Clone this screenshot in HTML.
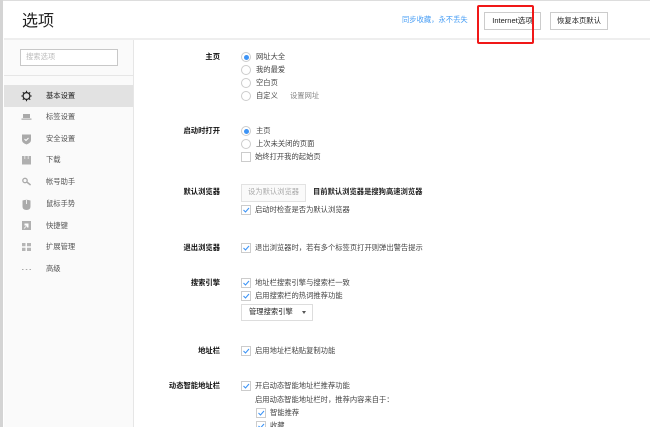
<!DOCTYPE html>
<html><head><meta charset="utf-8"><style>
html,body{margin:0;padding:0;width:650px;height:427px;overflow:hidden;background:#fff}
body{position:relative;font-family:"Liberation Sans","Noto Sans CJK SC",sans-serif;font-size:7.3px;color:#444;filter:blur(.25px)}
.a{position:absolute}
.t{position:absolute;white-space:nowrap;line-height:10px;height:10px}
.l{position:absolute;white-space:nowrap;line-height:10px;height:10px;right:430px;color:#111;font-weight:bold}
.s{position:absolute;left:46px;white-space:nowrap;line-height:10px;color:#555}
.r{position:absolute;left:241px;width:8px;height:8px;border:1px solid #ccc;border-radius:50%;background:#fff}
.r.on::after{content:"";position:absolute;left:1.5px;top:1.5px;width:5px;height:5px;border-radius:50%;background:#3d94f6}
.c{position:absolute;width:8px;height:8px;border:1px solid #ccc;background:#fff}
.c svg{position:absolute;left:0;top:0}
.b{position:absolute;border:1px solid #ccc;box-sizing:border-box;text-align:center;background:#fff;color:#222;line-height:16px;white-space:nowrap}
</style></head><body>
<div class="a" style="left:0;top:0;width:650px;height:1px;background:#ddd"></div>
<div class="a" style="left:0;top:0;width:3px;height:427px;background:#d4d4d4"></div>
<div class="a" style="left:4px;top:40px;width:129px;height:387px;background:#fafafa"></div>
<div class="a" style="left:133px;top:40px;width:1px;height:387px;background:#e6e6e6"></div>
<div class="a" style="left:4px;top:38px;width:646px;height:2px;background:#eee"></div>
<div class="t" style="left:22px;top:13px;height:18px;line-height:18px;font-size:16px;color:#222">选项</div>
<div class="t" style="left:402px;top:15px;color:#4a9ff5">同步收藏，永不丢失</div>
<div class="b" style="left:484px;top:12px;width:57px;height:18px;font-size:7.5px">Internet选项</div>
<div class="b" style="left:550px;top:12px;width:58px;height:18px">恢复本页默认</div>
<div class="a" style="left:477px;top:5px;width:53px;height:35px;border:2px solid #f01818;border-radius:2px"></div>

<div class="a" style="left:20px;top:49px;width:96px;height:15px;border:1px solid #c8c8c8;background:#fff"></div>
<div class="t" style="left:26px;top:52px;color:#bbb">搜索选项</div>
<div class="a" style="left:4px;top:75px;width:129px;height:1px;background:#e6e6e6"></div>
<div class="a" style="left:4px;top:85px;width:129px;height:22px;background:#e2e2e2"></div>

<svg class="a" style="left:0;top:0" width="134" height="280">
<g transform="translate(26.5,96)"><circle r="3.4" fill="none" stroke="#222" stroke-width="1.2"/><path d="M0-5.2V-3.4M0 3.4V5.2M-5.2 0H-3.4M3.4 0H5.2M-3.7-3.7L-2.5-2.5M3.7-3.7L2.5-2.5M-3.7 3.7L-2.5 2.5M3.7 3.7L2.5 2.5" stroke="#222" stroke-width="1.1"/></g>
<path d="M23 114h7v4h-7zM21.5 118.500h10v1.200h-10z" fill="#aaa"/>
<path d="M22 134.500h9v5.500q0 3-4.500 4.500q-4.500-1.500-4.500-4.500z" fill="#aaa"/><path d="M24.500 139l1.500 1.500 2.500-2.500" fill="none" stroke="#fff" stroke-width="1"/>
<path d="M22 156h2.500v3h4v-3h2.500v8.500h-9z" fill="#b0b0b0"/><path d="M25.200 156h2.600v3h1.400l-2.700 2.500-2.700-2.500h1.400z" fill="#b0b0b0"/>
<circle cx="25" cy="180.500" r="2.200" fill="none" stroke="#aaa" stroke-width="1.300"/><path d="M26.800 182l3.800 3" stroke="#aaa" stroke-width="1.500"/>
<path d="M22.500 200.500q4-1.500 8 0v6q0 3.500-4 3.500t-4-3.500z" fill="#aaa"/><path d="M26.500 200v4" stroke="#fff" stroke-width=".8"/>
<rect x="22" y="221" width="9" height="9" fill="#b0b0b0"/><path d="M24.500 223.500h4v4h-1.500v-2h-2.500z" fill="#fff"/><path d="M24 228.500l3-3" stroke="#fff" stroke-width=".8"/>
<path d="M22 243h3.500v3.200h-3.500zM27 243h4v3.200h-4zM22 247.700h3.500v3.300h-3.500zM27 247.700h4v3.300h-4z" fill="#b5b5b5"/>
<path d="M22 269h1.500v1h-1.500zM25.800 269h1.500v1h-1.500zM29.500 269h1.500v1h-1.500z" fill="#aaa"/>
</svg>

<div class="s" style="top:91px;color:#222">基本设置</div>
<div class="s" style="top:112px">标签设置</div>
<div class="s" style="top:134px">安全设置</div>
<div class="s" style="top:155px">下载</div>
<div class="s" style="top:177px">帐号助手</div>
<div class="s" style="top:199px">鼠标手势</div>
<div class="s" style="top:221px">快捷键</div>
<div class="s" style="top:242px">扩展管理</div>
<div class="s" style="top:264px">高级</div>

<div class="l" style="top:52px">主页</div>
<div class="r on" style="top:52px"></div><div class="t" style="left:256px;top:52px">网址大全</div>
<div class="r" style="top:65px"></div><div class="t" style="left:256px;top:65px">我的最爱</div>
<div class="r" style="top:78px"></div><div class="t" style="left:256px;top:78px">空白页</div>
<div class="r" style="top:91px"></div><div class="t" style="left:256px;top:91px">自定义</div>
<div class="t" style="left:290px;top:91px;color:#888">设置网址</div>

<div class="l" style="top:126px">启动时打开</div>
<div class="r on" style="top:126px"></div><div class="t" style="left:256px;top:126px">主页</div>
<div class="r" style="top:139px"></div><div class="t" style="left:256px;top:139px">上次未关闭的页面</div>
<div class="c" style="left:241px;top:152px"></div><div class="t" style="left:255px;top:152px">始终打开我的起始页</div>

<div class="l" style="top:187px">默认浏览器</div>
<div class="a" style="left:241px;top:184px;width:63px;height:16px;border:1px solid #e2e2e2;background:#fafafa"></div>
<div class="t" style="left:248px;top:187px;color:#aaa">设为默认浏览器</div>
<div class="t" style="left:313px;top:187px;color:#222;font-weight:bold">目前默认浏览器是搜狗高速浏览器</div>
<div class="c" style="left:241px;top:205px"><svg width="8" height="8"><path d="M1.500 4l2 2 3.500-4" fill="none" stroke="#3d94f6" stroke-width="1.100"/></svg></div><div class="t" style="left:255px;top:205px">启动时检查是否为默认浏览器</div>

<div class="l" style="top:243px">退出浏览器</div>
<div class="c" style="left:241px;top:243px"><svg width="8" height="8"><path d="M1.500 4l2 2 3.500-4" fill="none" stroke="#3d94f6" stroke-width="1.100"/></svg></div><div class="t" style="left:255px;top:243px">退出浏览器时，若有多个标签页打开则弹出警告提示</div>

<div class="l" style="top:278px">搜索引擎</div>
<div class="c" style="left:241px;top:278px"><svg width="8" height="8"><path d="M1.500 4l2 2 3.500-4" fill="none" stroke="#3d94f6" stroke-width="1.100"/></svg></div><div class="t" style="left:255px;top:278px">地址栏搜索引擎与搜索栏一致</div>
<div class="c" style="left:241px;top:291px"><svg width="8" height="8"><path d="M1.500 4l2 2 3.500-4" fill="none" stroke="#3d94f6" stroke-width="1.100"/></svg></div><div class="t" style="left:255px;top:291px">启用搜索栏的热词推荐功能</div>
<div class="a" style="left:241px;top:304px;width:70px;height:15px;border:1px solid #ddd;background:#fff"></div>
<div class="t" style="left:249px;top:307px;color:#222">管理搜索引擎</div>
<div class="a" style="left:302px;top:311px;width:0;height:0;border-left:2.500px solid transparent;border-right:2.500px solid transparent;border-top:3px solid #555"></div>

<div class="l" style="top:346px">地址栏</div>
<div class="c" style="left:241px;top:346px"><svg width="8" height="8"><path d="M1.500 4l2 2 3.500-4" fill="none" stroke="#3d94f6" stroke-width="1.100"/></svg></div><div class="t" style="left:255px;top:346px">启用地址栏粘贴复制功能</div>

<div class="l" style="top:381px">动态智能地址栏</div>
<div class="c" style="left:241px;top:381px"><svg width="8" height="8"><path d="M1.500 4l2 2 3.500-4" fill="none" stroke="#3d94f6" stroke-width="1.100"/></svg></div><div class="t" style="left:255px;top:381px">开启动态智能地址栏推荐功能</div>
<div class="t" style="left:255px;top:395px">启用动态智能地址栏时，推荐内容来自于：</div>
<div class="c" style="left:256px;top:408px"><svg width="8" height="8"><path d="M1.500 4l2 2 3.500-4" fill="none" stroke="#3d94f6" stroke-width="1.100"/></svg></div><div class="t" style="left:270px;top:408px">智能推荐</div>
<div class="c" style="left:256px;top:421px"><svg width="8" height="8"><path d="M1.500 4l2 2 3.500-4" fill="none" stroke="#3d94f6" stroke-width="1.100"/></svg></div><div class="t" style="left:270px;top:421px">收藏</div>
</body></html>
